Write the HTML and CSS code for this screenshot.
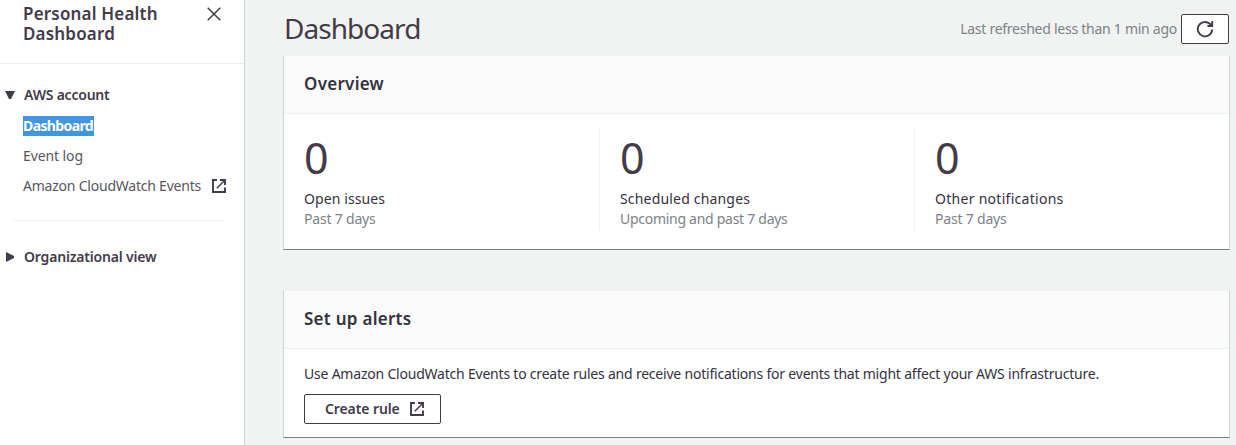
FILE: index.html
```html
<!DOCTYPE html>
<html lang="en">
<head>
<meta charset="utf-8">
<title>Personal Health Dashboard</title>
<link rel="stylesheet" href="styles.css">
</head>
<body>
<div class="app">
  <nav class="sidebar">
    <header class="sidebar-header">
      <h2 class="sidebar-title">Personal Health Dashboard</h2>
      <svg class="close" width="14" height="14" viewBox="0 0 14 14"><path d="M.7.7l12.6 12.6M13.3.7L.7 13.3" fill="none" stroke="#443b49" stroke-width="1.5"/></svg>
    </header>
    <section class="group">
      <div class="group-title"><svg class="caret" width="10" height="10" viewBox="0 0 10 10"><path d="M0 1h10L6 9H4z" fill="#443b49"/></svg><span class="t-account">AWS account</span></div>
      <a class="link"><span class="selected">Dashboard</span></a>
      <a class="link"><span class="t-log">Event log</span></a>
      <a class="link"><span class="t-cw">Amazon CloudWatch Events</span>
        <svg class="external" width="14" height="14" viewBox="0 0 14 14"><path d="M5 1H1v12h12V8.5M8 1h5v5" fill="none" stroke="#443b49" stroke-width="1.9"/><path d="M13 1L4.8 9.2" stroke="#443b49" stroke-width="1.5"/></svg></a>
    </section>
    <hr class="divider">
    <div class="group-title"><svg class="caret" width="10" height="10" viewBox="0 0 10 10"><path d="M1 0v10l8-4V4z" fill="#443b49"/></svg><span class="t-org">Organizational view</span></div>
  </nav>
  <main class="content">
    <div class="page-header">
      <h1 class="page-title">Dashboard</h1>
      <div class="refresh">
        <span class="refresh-text">Last refreshed less than 1 min ago</span>
        <button class="refresh-button" aria-label="Refresh"><svg width="18" height="18" viewBox="0 0 18 18"><path d="M16.2 9.5A7.2 7.2 0 1 1 13.8 3.8L15.8 5.6M16.2 1v5H11.4" fill="none" stroke="#443b49" stroke-width="1.9"/></svg></button>
      </div>
    </div>
    <section class="card overview">
      <h2 class="card-header"><span class="t-overview">Overview</span></h2>
      <div class="stats">
        <div class="stat"><div class="count">0</div><div class="label t-open">Open issues</div><div class="period t-past">Past 7 days</div></div>
        <div class="stat"><div class="count">0</div><div class="label t-sched">Scheduled changes</div><div class="period t-upcoming">Upcoming and past 7 days</div></div>
        <div class="stat"><div class="count">0</div><div class="label t-other">Other notifications</div><div class="period t-past">Past 7 days</div></div>
      </div>
    </section>
    <section class="card alerts">
      <h2 class="card-header"><span class="t-setup">Set up alerts</span></h2>
      <div class="alerts-body">
        <p class="description">Use Amazon CloudWatch Events to create rules and receive notifications for events that might affect your AWS infrastructure.</p>
        <button class="create"><span class="t-create">Create rule</span><svg width="14" height="14" viewBox="0 0 14 14"><path d="M5 1H1v12h12V8.5M8 1h5v5" fill="none" stroke="#443b49" stroke-width="1.9"/><path d="M13 1L4.8 9.2" stroke="#443b49" stroke-width="1.5"/></svg></button>
      </div>
    </section>
  </main>
</div>
</body>
</html>
```
FILE: styles.css
```css
* { box-sizing: border-box; }
body { margin: 0; font: 14px/20px "Noto Sans", "Open Sans", sans-serif; color: #35323e; background: #f1f3f3; }
h1, h2, p { margin: 0; }
svg { flex: none; display: block; }
span, .label, .period, .description, .page-title { white-space: nowrap; }
.app { display: flex; height: 445px; overflow: hidden; }
.sidebar { width: 245px; flex: none; background: #fff; border-right: 1px solid #c6d3d9; }
.sidebar-header { height: 64px; padding: 4px 23px 0; display: flex; justify-content: space-between; border-bottom: 1px solid #eeeff0; }
.sidebar-title { width: 150px; font-size: 17px; line-height: 20px; font-weight: 600; letter-spacing: .18px; color: #443b49; }
.close { margin-top: 3px; }
.group { padding-top: 21px; }
.group-title { display: flex; align-items: center; gap: 9px; padding-left: 5px; height: 20px; font-weight: 600; color: #443b49; }
.t-account { letter-spacing: -.22px; }
.t-org { letter-spacing: -.18px; }
.link { display: flex; align-items: center; height: 20px; margin: 11px 0 0 23px; gap: 11px; color: #57565f; }
.link + .link { margin-top: 10px; }
.selected { height: 20px; width: 71px; background: #4295e2; color: #fff; font-weight: 700; letter-spacing: -.62px; }
.t-log { letter-spacing: -.1px; }
.t-cw { width: 178px; letter-spacing: -.22px; }
.divider { height: 1px; border: 0; margin: 24px 20px 26px 13px; background: #eeeff0; }
.content { flex: 1; padding: 0 7px 0 38px; min-width: 0; }
.page-header { height: 55px; display: flex; justify-content: space-between; }
.page-title { font-size: 28px; line-height: 36px; font-weight: 400; letter-spacing: -.95px; padding: 10px 0 0 1px; color: #443b49; }
.refresh { display: flex; gap: 4px; padding-top: 14px; height: 44px; align-items: center; }
.refresh-text { color: #7d8188; letter-spacing: -.26px; }
.refresh-button { width: 48px; height: 30px; padding: 0; display: grid; place-items: center; background: #fff; border: 1px solid #443b49; border-radius: 2px; }
.card { margin-right: -1px; background: #fff; border: 1px solid #ccd5d9; border-top-color: #f1f3f3; border-bottom-color: #7c8086; }
.overview { height: 195px; }
.alerts { height: 148px; margin-top: 40px; }
.card-header { height: 58px; padding: 0 20px; font-size: 17px; line-height: 56px; font-weight: 600; color: #35323e; background: #fafafa; border-bottom: 1px solid #eeefef; }
.t-overview, .t-setup { letter-spacing: .27px; }
.stats { display: grid; grid-template-columns: 315px 315px 1fr; padding-top: 14px; }
.stat { height: 102px; padding-left: 20px; border-left: 1px solid #f1f1f1; }
.stat:first-child { border-left: 0; }
.count { height: 61px; font-size: 43px; line-height: 60px; font-weight: 400; color: #443b49; }
.label { height: 20px; }
.period { color: #7d8188; }
.t-open { letter-spacing: .1px; }
.t-sched { letter-spacing: .18px; }
.t-other { letter-spacing: .28px; }
.t-past { letter-spacing: -.2px; }
.t-upcoming { letter-spacing: -.28px; }
.description { letter-spacing: -.21px; }
.alerts-body { padding: 15px 20px; }
.create { display: flex; align-items: center; gap: 10px; height: 30px; width: 137px; margin-top: 10px; padding: 0 0 0 20px; font: 600 14px/20px "Noto Sans", sans-serif; letter-spacing: -.1px; color: #443b49; background: #fff; border: 1px solid #443b49; border-radius: 2px; }
```
